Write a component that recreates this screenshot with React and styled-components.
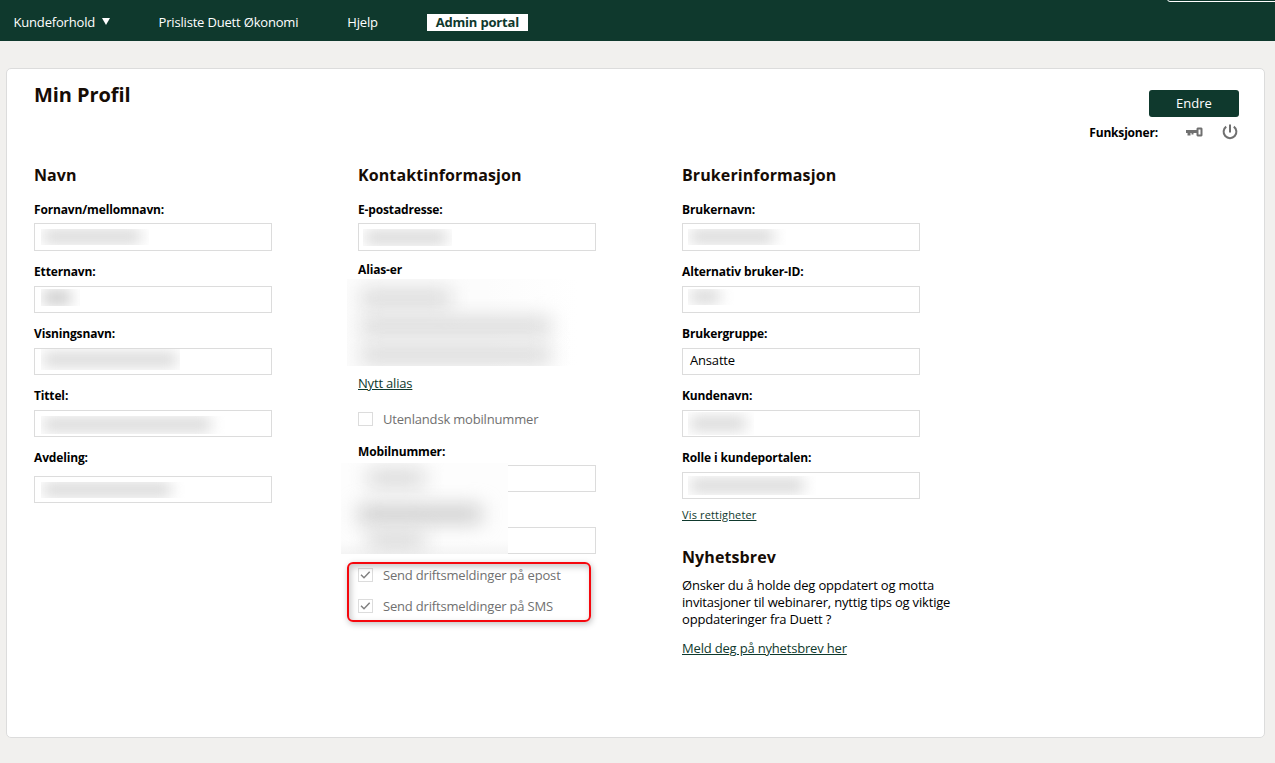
import React from "react";
import styled, { createGlobalStyle } from "styled-components";

const GlobalStyle = createGlobalStyle`
  * {
    box-sizing: border-box;
  }
  body {
    margin: 0;
    background: #f1f0ee;
    color: #000;
    font-family: "Open Sans", sans-serif;
    font-size: 13px;
    line-height: 18px;
    letter-spacing: -0.18px;
  }
  h1, h2, p {
    margin: 0;
  }
`;

const App = () => {
  return (
    <>
      <GlobalStyle />
      <Navbar>
        <NavLink>
          Kundeforhold
          <Caret viewBox="0 0 8 7">
            <path d="M0 0h8L4 7z" />
          </Caret>
        </NavLink>
        <NavLink>Prisliste Duett Økonomi</NavLink>
        <NavLink>Hjelp</NavLink>
        <AdminLink>Admin portal</AdminLink>
        <SearchEdge />
      </Navbar>

      <Card>
        <Header>
          <Title>Min Profil</Title>
          <Actions>
            <Button>Endre</Button>
            <Functions>
              Funksjoner:
              <KeyIcon viewBox="0 0 17 10">
                <path
                  fillRule="evenodd"
                  d="M0 3h10.500V1.500L11.500 0.500h4L16.500 1.500v7L15.500 9.500h-4L10.500 8.500V6H7.500v1.500H5.500V6H4.500v2.500H1.500V6H0zM12.500 2.500v5h2v-5z"
                />
              </KeyIcon>
              <PowerIcon viewBox="0 0 16 16">
                <path d="M8 0.500v8M4.200 2.600a6.400 6.400 0 1 0 7.600 0" />
              </PowerIcon>
            </Functions>
          </Actions>
        </Header>

        <Columns>
          <Column>
            <Heading>Navn</Heading>
            <Field label="Fornavn/mellomnavn:" gap={4} height={28}>
              <Redacted $w={108} $h={16} $top={5} $text={98} />
            </Field>
            <Field label="Etternavn:">
              <Redacted $w={39} $h={17} $top={2} $text={28} $dark />
            </Field>
            <Field label="Visningsnavn:">
              <Redacted $w={139} $h={21} $top={0} $text={134} />
            </Field>
            <Field label="Tittel:">
              <Redacted $w={188} $h={18} $top={5} $text={168} />
            </Field>
            <Field label="Avdeling:" gap={9}>
              <Redacted $w={152} $h={16} $top={5} $text={128} />
            </Field>
          </Column>

          <Column>
            <Heading>Kontaktinformasjon</Heading>
            <Field label="E-postadresse:" gap={4} height={28} space={10}>
              <Redacted $left={4} $w={89} $h={17} $top={5} $text={82} />
            </Field>
            <Label>Alias-er</Label>
            <AliasList>
              <Smudge $x={14} $y={12} $w={90} />
              <Smudge $x={14} $y={40} $w={190} />
              <Smudge $x={14} $y={69} $w={190} />
            </AliasList>
            <Link>Nytt alias</Link>
            <Check $top={18} $bottom={15}>
              <Box />
              Utenlandsk mobilnummer
            </Check>
            <PhoneGroup>
              <Field label="Mobilnummer:" gap={4} space={13} />
              <Field label="" gap={4} space={0} />
              <PhoneCover>
                <Smudge $x={26} $y={8} $w={58} />
                <Smudge $x={17} $y={44} $w={124} $dark />
                <Smudge $x={26} $y={70} $w={58} />
              </PhoneCover>
            </PhoneGroup>
            <Notifications>
              <Check $bottom={13}>
                <Box>
                  <Tick />
                </Box>
                Send driftsmeldinger på epost
              </Check>
              <Check>
                <Box>
                  <Tick />
                </Box>
                Send driftsmeldinger på SMS
              </Check>
              <Highlight />
            </Notifications>
          </Column>

          <Column>
            <Heading>Brukerinformasjon</Heading>
            <Field label="Brukernavn:" gap={4} height={28}>
              <Redacted $left={5} $w={98} $h={16} $top={5} $text={84} />
            </Field>
            <Field label="Alternativ bruker-ID:">
              <Redacted $left={5} $w={49} $h={16} $top={2} $text={30} />
            </Field>
            <Field label="Brukergruppe:">Ansatte</Field>
            <Field label="Kundenavn:">
              <Redacted $left={5} $w={66} $h={23} $top={1} $text={56} />
            </Field>
            <Field label="Rolle i kundeportalen:" space={7}>
              <Redacted $left={5} $w={128} $h={19} $top={3} $text={114} />
            </Field>
            <SmallLink>Vis rettigheter</SmallLink>
            <Newsletter>
              <Heading>Nyhetsbrev</Heading>
              <p>
                Ønsker du å holde deg oppdatert og motta invitasjoner til
                webinarer, nyttig tips og viktige oppdateringer fra Duett ?
              </p>
              <Link>Meld deg på nyhetsbrev her</Link>
            </Newsletter>
          </Column>
        </Columns>
      </Card>
    </>
  );
};

const Field = ({ label, gap = 5, height = 27, space = 12, children }) => (
  <FieldWrapper $space={space}>
    <Label $gap={gap}>{label}</Label>
    <Input $height={height}>{children}</Input>
  </FieldWrapper>
);

const Tick = () => (
  <TickIcon viewBox="0 0 13 12">
    <path d="M2 5.800L5 8.700L10.700 2.800" />
  </TickIcon>
);

const Navbar = styled.nav`
  position: relative;
  display: flex;
  align-items: center;
  height: 41px;
  padding: 3px 0 0 13.5px;
  background: #0f392d;
  color: #fff;
  overflow: hidden;
`;

const NavLink = styled.a`
  display: flex;
  align-items: center;
  margin-right: 49px;
  white-space: nowrap;
`;

const Caret = styled.svg`
  width: 8px;
  height: 7px;
  margin: -1px 0 0 6.5px;
  fill: #fff;
`;

const AdminLink = styled.a`
  width: 101px;
  height: 17px;
  background: #fff;
  color: #0f392d;
  font-weight: 700;
  line-height: 17px;
  text-align: center;
`;

const SearchEdge = styled.span`
  position: absolute;
  top: -18px;
  right: -10px;
  width: 118px;
  height: 20px;
  border: 1px solid #fff;
  border-radius: 3px;
`;

const Card = styled.main`
  width: 1259px;
  height: 670px;
  margin: 27px 0 0 6px;
  padding: 0 25px 0 27px;
  background: #fff;
  border: 1px solid #dcdcdc;
  border-radius: 5px;
`;

const Header = styled.header`
  display: flex;
  justify-content: space-between;
  height: 94px;
`;

const Title = styled.h1`
  padding-top: 12px;
  color: #160c05;
  font-size: 20px;
  font-weight: 700;
  line-height: 28px;
  letter-spacing: -0.08px;
`;

const Actions = styled.div`
  display: flex;
  flex-direction: column;
  align-items: flex-end;
  padding-top: 21px;
`;

const Button = styled.button`
  width: 90px;
  height: 27px;
  padding: 0 0 2px;
  border: 0;
  border-radius: 3px;
  background: #0f392d;
  color: #fff;
  font: inherit;
`;

const Functions = styled.div`
  display: flex;
  align-items: center;
  margin-top: 7px;
  font-size: 12px;
  font-weight: 700;
`;

const KeyIcon = styled.svg`
  width: 17px;
  height: 10px;
  margin: -2px 19px 0 28px;
  fill: #707070;
`;

const PowerIcon = styled.svg`
  width: 16px;
  height: 16px;
  margin: -2px 1px 0 0;
  fill: none;
  stroke: #707070;
  stroke-width: 2;
`;

const Columns = styled.div`
  display: grid;
  grid-template-columns: repeat(3, 324px);
`;

const Column = styled.section`
  display: flex;
  flex-direction: column;
  align-items: flex-start;
`;

const Heading = styled.h2`
  margin-bottom: 14px;
  color: #160c05;
  font-size: 16px;
  font-weight: 700;
  line-height: 24px;
  letter-spacing: 0.1px;
`;

const FieldWrapper = styled.div`
  margin-bottom: ${(p) => p.$space}px;
`;

const Label = styled.label`
  display: block;
  height: 18px;
  margin-bottom: ${(p) => p.$gap || 0}px;
  font-size: 12px;
  font-weight: 700;
  letter-spacing: -0.15px;
  white-space: nowrap;
`;

const Input = styled.div`
  width: 238px;
  height: ${(p) => p.$height}px;
  padding-left: 7px;
  border: 1px solid #dcdcdc;
  line-height: 22px;
`;

const Redacted = styled.div`
  position: relative;
  top: ${(p) => p.$top}px;
  left: ${(p) => (p.$left || 6) - 7}px;
  width: ${(p) => p.$w}px;
  height: ${(p) => p.$h}px;
  overflow: hidden;
  &::before {
    content: "";
    position: absolute;
    top: calc(50% - 8px);
    left: 2px;
    width: ${(p) => p.$text}px;
    height: 15px;
    background: ${(p) => (p.$dark ? "#cccccc" : "#dadada")};
    filter: blur(7px);
  }
`;

const Smudge = styled.span`
  position: absolute;
  top: ${(p) => p.$y - 1}px;
  left: ${(p) => p.$x}px;
  width: ${(p) => p.$w}px;
  height: 16px;
  background: ${(p) => (p.$dark ? "#c6c6c6" : "#d4d4d4")};
  filter: blur(10px);
`;

const AliasList = styled.div`
  position: relative;
  width: 231px;
  height: 87px;
  margin: 0 0 8px -11px;
  background: linear-gradient(90deg, #fcfcfc 60%, #fff);
  overflow: hidden;
`;

const Link = styled.a`
  color: #0f392d;
  text-decoration: underline;
`;

const SmallLink = styled(Link)`
  font-size: 11px;
  line-height: 17px;
  letter-spacing: 0.15px;
`;

const Check = styled.label`
  display: flex;
  align-items: center;
  height: 18px;
  margin-top: ${(p) => p.$top || 0}px;
  margin-bottom: ${(p) => p.$bottom || 0}px;
  color: #707070;
  white-space: nowrap;
`;

const Box = styled.span`
  display: flex;
  width: 15px;
  height: 14px;
  margin-right: 10px;
  border: 1px solid #dcdcdc;
`;

const TickIcon = styled.svg`
  width: 13px;
  height: 12px;
  fill: none;
  stroke: #808080;
  stroke-width: 1.5;
`;

const PhoneGroup = styled.div`
  position: relative;
`;

const PhoneCover = styled.div`
  position: absolute;
  top: 20px;
  left: -17px;
  width: 167px;
  height: 91px;
  background: linear-gradient(#fdfdfd 85%, #f4f4f4);
  overflow: hidden;
`;

const Notifications = styled.div`
  position: relative;
  margin-top: 12px;
`;

const Highlight = styled.div`
  position: absolute;
  top: -4px;
  left: -11px;
  width: 244px;
  height: 60px;
  border: 2px solid #f5070d;
  border-radius: 6px;
  box-shadow: 1px 2px 6px rgba(0, 0, 0, 0.25),
    inset 2px 3px 6px rgba(0, 0, 0, 0.22);
`;

const Newsletter = styled.div`
  width: 280px;
  margin-top: 22px;
  line-height: 17px;
  ${Heading} {
    margin-bottom: 8px;
  }
  p {
    margin-bottom: 12px;
  }
`;

export default App;
